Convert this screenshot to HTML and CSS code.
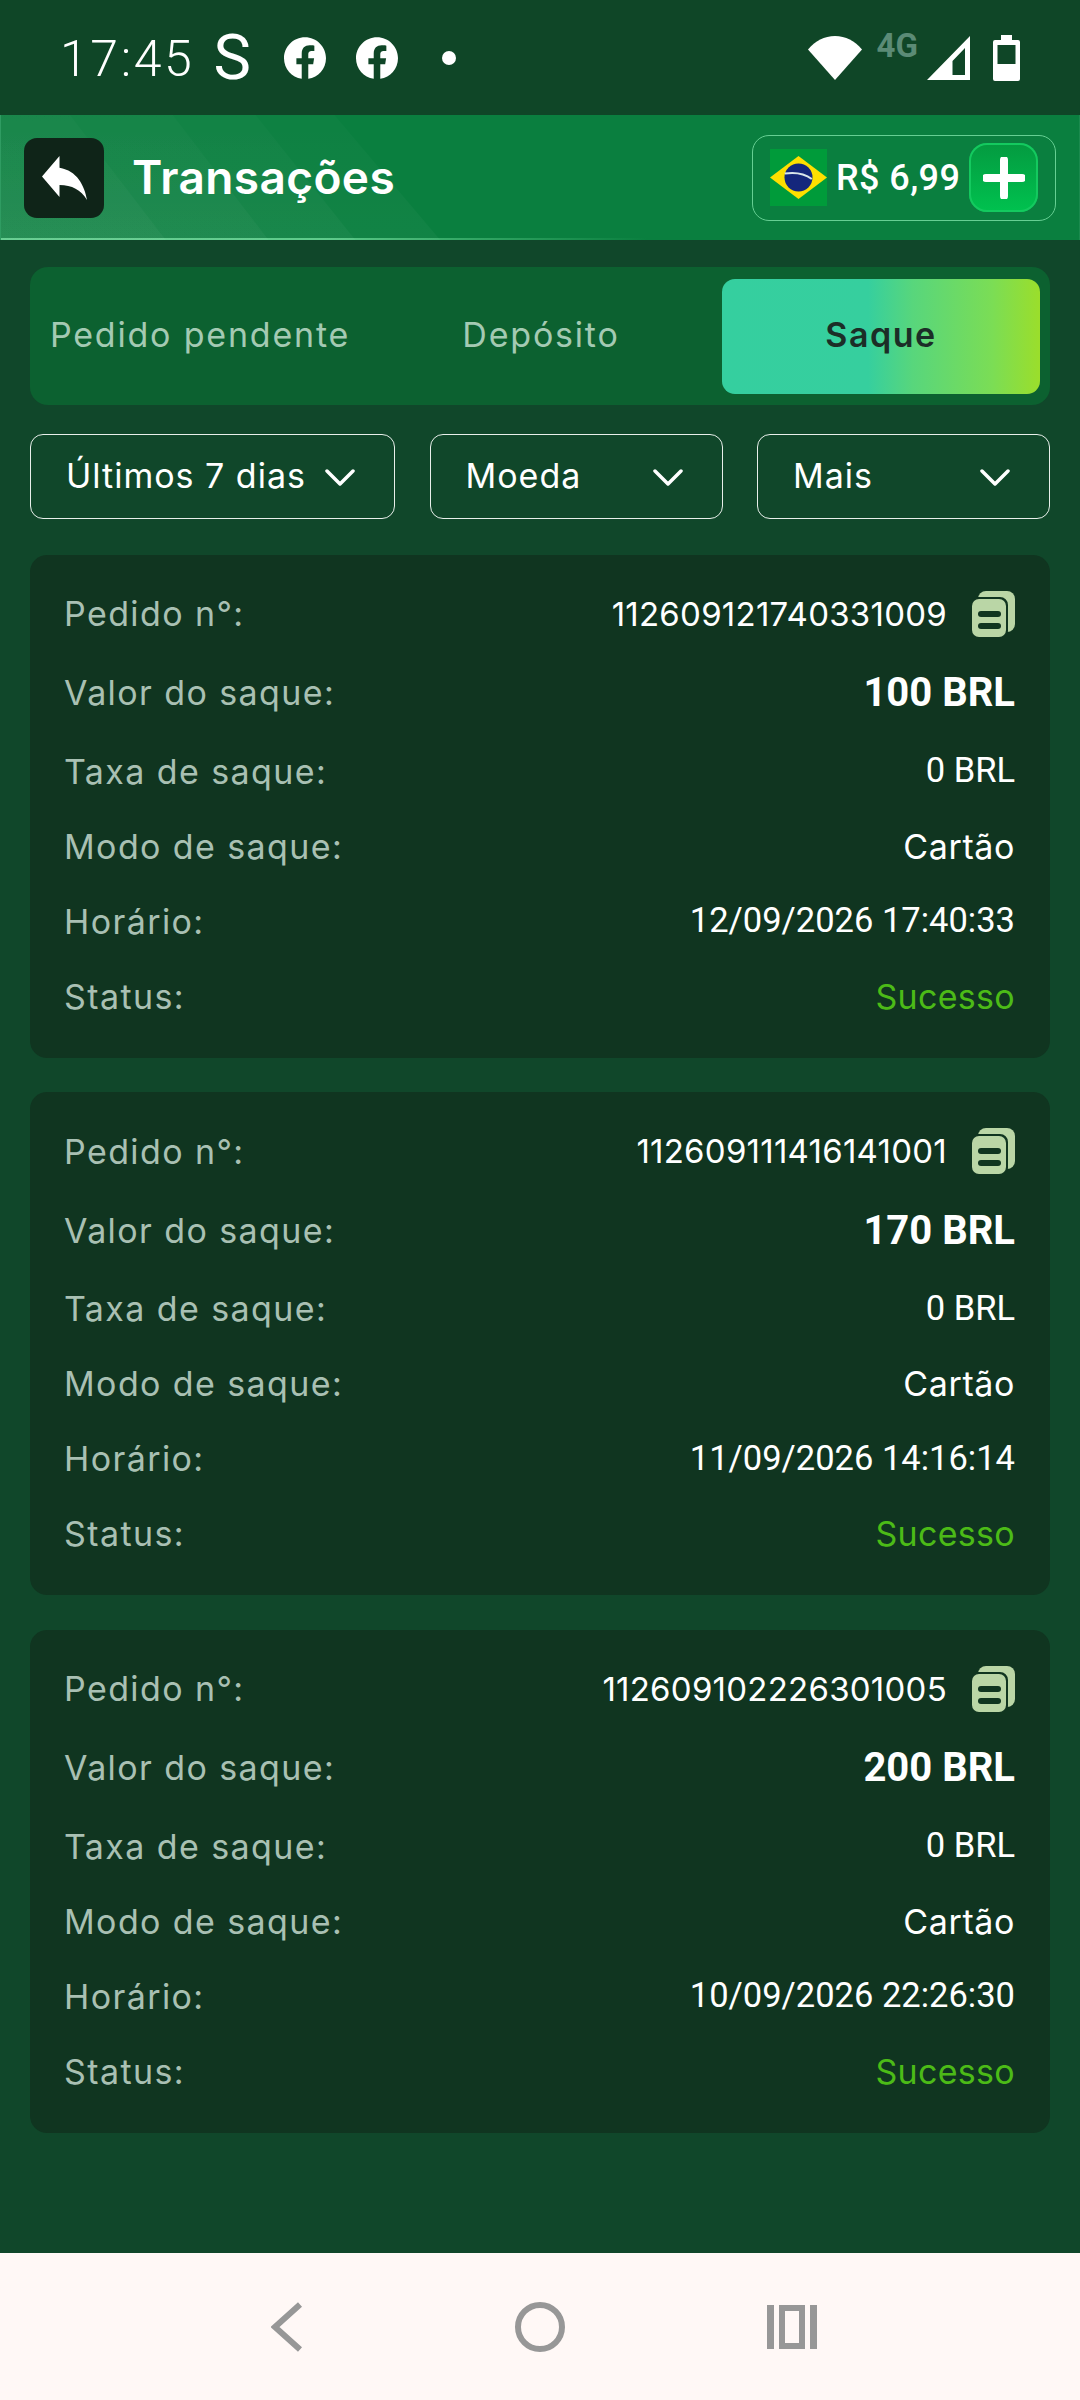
FILE: index.html
```html
<!DOCTYPE html>
<html lang="pt-BR">
<head>
<meta charset="utf-8">
<title>Transações</title>
<link rel="stylesheet" href="styles.css">
</head>
<body>
<div class="screen">
  <div class="statusbar">
    <span class="time">17:45</span>
    <span class="s-icon">S</span>
    <svg class="fb fb-first" viewBox="0 0 24 24"><path d="M24 12.073c0-6.627-5.373-12-12-12s-12 5.373-12 12c0 5.99 4.388 10.954 10.125 11.854v-8.385H7.078v-3.47h3.047V9.43c0-3.007 1.792-4.669 4.533-4.669 1.312 0 2.686.235 2.686.235v2.953H15.83c-1.491 0-1.956.925-1.956 1.874v2.25h3.328l-.532 3.47h-2.796v8.385C19.612 23.027 24 18.062 24 12.073z"/></svg>
    <svg class="fb fb-second" viewBox="0 0 24 24"><path d="M24 12.073c0-6.627-5.373-12-12-12s-12 5.373-12 12c0 5.99 4.388 10.954 10.125 11.854v-8.385H7.078v-3.47h3.047V9.43c0-3.007 1.792-4.669 4.533-4.669 1.312 0 2.686.235 2.686.235v2.953H15.83c-1.491 0-1.956.925-1.956 1.874v2.25h3.328l-.532 3.47h-2.796v8.385C19.612 23.027 24 18.062 24 12.073z"/></svg>
    <span class="dot"></span>
    <span class="status-spacer"></span>
    <svg class="wifi" viewBox="0 0 54 44"><path d="M0 13.5C7 5 16.500 0 27 0s20 5 27 13.500L27 44z"/></svg>
    <span class="net">4G</span>
    <svg class="signal" viewBox="0 0 43 44"><path fill-rule="evenodd" d="M43 0v44H0zM38 12 25.500 25v14H38z"/></svg>
    <svg class="battery" viewBox="0 0 27 46"><path fill-rule="evenodd" d="M8 0h11v5h6a2 2 0 0 1 2 2v37a2 2 0 0 1-2 2H2a2 2 0 0 1-2-2V7a2 2 0 0 1 2-2h6zM4.500 10v19h18V10z"/></svg>
  </div>

  <header class="topbar">
    <svg class="stripes" viewBox="0 0 1080 125" preserveAspectRatio="none">
      <defs>
        <linearGradient id="fade" x1="0" y1="0" x2="0" y2="1">
          <stop offset="0" stop-color="#fff" stop-opacity="0.016"/>
          <stop offset="1" stop-color="#fff" stop-opacity="0.032"/>
        </linearGradient>
      </defs>
      <polygon fill="url(#fade)" points="0,0 69,0 165,125 0,125"/>
      <polygon fill="url(#fade)" points="0,0 172,0 268,125 0,125"/>
      <polygon fill="url(#fade)" points="0,0 255,0 355,125 0,125"/>
      <polygon fill="url(#fade)" points="0,0 334,0 440,125 0,125"/>
    </svg>
    <button class="back" type="button" aria-label="Voltar">
      <svg viewBox="3 5 18 15" preserveAspectRatio="none"><path d="M10 9V5l-7 7 7 7v-4.100c5 0 8.500 1.600 11 5.100-1-5-4-10-11-11z"/></svg>
    </button>
    <h1 class="title">Transações</h1>
    <div class="balance">
      <svg class="flag" viewBox="0 0 57 57">
        <rect width="57" height="57" fill="#009b3a"/>
        <polygon points="28.500,7 57,28.500 28.500,50 0,28.500" fill="#fedf00"/>
        <circle cx="28.500" cy="28.500" r="14" fill="#14277c"/>
        <path d="M14.800 24.500c10-1.500 19-.5 27 5.500" fill="none" stroke="#d9e6ea" stroke-width="2"/>
      </svg>
      <span class="amount">R$ 6,99</span>
      <span class="plus">
        <svg viewBox="0 0 42 42"><path d="M21 3v36M3 21h36" fill="none" stroke="#fff" stroke-width="8" stroke-linecap="round"/></svg>
      </span>
    </div>
  </header>

  <main class="content">
    <nav class="tabs">
      <span class="tab">Pedido pendente</span>
      <span class="tab">Depósito</span>
      <span class="tab tab-active">Saque</span>
    </nav>

    <div class="filters">
      <div class="filter"><span>Últimos 7 dias</span><svg class="chev" viewBox="0 0 30 18"><path d="M2 2l13 13L28 2" fill="none" stroke="#fff" stroke-width="3.500" stroke-linecap="round" stroke-linejoin="round"/></svg></div>
      <div class="filter"><span>Moeda</span><svg class="chev" viewBox="0 0 30 18"><path d="M2 2l13 13L28 2" fill="none" stroke="#fff" stroke-width="3.500" stroke-linecap="round" stroke-linejoin="round"/></svg></div>
      <div class="filter"><span>Mais</span><svg class="chev" viewBox="0 0 30 18"><path d="M2 2l13 13L28 2" fill="none" stroke="#fff" stroke-width="3.500" stroke-linecap="round" stroke-linejoin="round"/></svg></div>
    </div>

    <section class="cards">
      <article class="card">
        <div class="row row-first"><span class="label">Pedido n°:</span><span class="value order">112609121740331009<svg class="copy" viewBox="0 0 43 46"><rect x="6" y="0" width="37" height="41" rx="8" fill="#bad6a6"/><rect x="-2" y="6" width="38" height="42" rx="8" fill="#103520"/><rect x="0" y="8" width="34" height="38" rx="7" fill="#bad6a6"/><rect x="6" y="20" width="23" height="6" rx="3" fill="#103520"/><rect x="6" y="32" width="23" height="6" rx="3" fill="#103520"/></svg></span></div>
        <div class="row row-second"><span class="label">Valor do saque:</span><span class="value strong">100 BRL</span></div>
        <div class="row"><span class="label">Taxa de saque:</span><span class="value num">0 BRL</span></div>
        <div class="row"><span class="label">Modo de saque:</span><span class="value">Cartão</span></div>
        <div class="row"><span class="label">Horário:</span><span class="value num">12/09/2026 17:40:33</span></div>
        <div class="row"><span class="label">Status:</span><span class="value ok">Sucesso</span></div>
      </article>
      <article class="card">
        <div class="row row-first"><span class="label">Pedido n°:</span><span class="value order">112609111416141001<svg class="copy" viewBox="0 0 43 46"><rect x="6" y="0" width="37" height="41" rx="8" fill="#bad6a6"/><rect x="-2" y="6" width="38" height="42" rx="8" fill="#103520"/><rect x="0" y="8" width="34" height="38" rx="7" fill="#bad6a6"/><rect x="6" y="20" width="23" height="6" rx="3" fill="#103520"/><rect x="6" y="32" width="23" height="6" rx="3" fill="#103520"/></svg></span></div>
        <div class="row row-second"><span class="label">Valor do saque:</span><span class="value strong">170 BRL</span></div>
        <div class="row"><span class="label">Taxa de saque:</span><span class="value num">0 BRL</span></div>
        <div class="row"><span class="label">Modo de saque:</span><span class="value">Cartão</span></div>
        <div class="row"><span class="label">Horário:</span><span class="value num">11/09/2026 14:16:14</span></div>
        <div class="row"><span class="label">Status:</span><span class="value ok">Sucesso</span></div>
      </article>
      <article class="card">
        <div class="row row-first"><span class="label">Pedido n°:</span><span class="value order">112609102226301005<svg class="copy" viewBox="0 0 43 46"><rect x="6" y="0" width="37" height="41" rx="8" fill="#bad6a6"/><rect x="-2" y="6" width="38" height="42" rx="8" fill="#103520"/><rect x="0" y="8" width="34" height="38" rx="7" fill="#bad6a6"/><rect x="6" y="20" width="23" height="6" rx="3" fill="#103520"/><rect x="6" y="32" width="23" height="6" rx="3" fill="#103520"/></svg></span></div>
        <div class="row row-second"><span class="label">Valor do saque:</span><span class="value strong">200 BRL</span></div>
        <div class="row"><span class="label">Taxa de saque:</span><span class="value num">0 BRL</span></div>
        <div class="row"><span class="label">Modo de saque:</span><span class="value">Cartão</span></div>
        <div class="row"><span class="label">Horário:</span><span class="value num">10/09/2026 22:26:30</span></div>
        <div class="row"><span class="label">Status:</span><span class="value ok">Sucesso</span></div>
      </article>
    </section>
  </main>

  <footer class="navbar">
    <svg class="nav-back" viewBox="0 0 32 50"><path d="M29 2.500 4 25l25 22.500" fill="none" stroke="#979797" stroke-width="6"/></svg>
    <span class="nav-home"></span>
    <svg class="nav-recent" viewBox="0 0 50 44"><path fill="#979797" fill-rule="evenodd" d="M0 0h7v44H0zM43 0h7v44h-7zM12 0h26v44H12zM18 6v32h14V6z"/></svg>
  </footer>
</div>
</body>
</html>
```

FILE: styles.css
```css
* { box-sizing: border-box; }

html, body { margin: 0; padding: 0; }

body {
  background: #10472a;
  font-family: "Inter", "Liberation Sans", sans-serif;
  color: #fff;
}

.screen {
  width: 1080px;
  height: 2400px;
  display: flex;
  flex-direction: column;
  overflow: hidden;
  background: #10472a;
}

/* Status bar */
.statusbar {
  height: 115px;
  flex: none;
  display: flex;
  align-items: center;
  padding: 0 60px 0 60px;
  background: #0f4627;
}
.time {
  font-family: "Roboto", sans-serif;
  font-weight: 300;
  font-size: 50px;
  letter-spacing: 2.6px;
  line-height: 1;
  margin-top: 2px;
}
.s-icon {
  font-family: "Roboto", sans-serif;
  font-weight: 400;
  font-size: 63px;
  line-height: 1;
  margin-left: 19px;
}
.fb { width: 42px; height: 42px; fill: #fff; }
.fb-first { margin-left: 33px; }
.fb-second { margin-left: 30px; }
.dot {
  width: 14px;
  height: 14px;
  border-radius: 50%;
  background: #fff;
  margin-left: 44px;
}
.status-spacer { flex: 1; }
.wifi { width: 54px; height: 44px; fill: #fff; }
.net {
  font-family: "Roboto", sans-serif;
  font-weight: 700;
  font-size: 33px;
  line-height: 1;
  color: #5b8b76;
  margin-left: 15px;
  margin-top: -24px;
}
.signal { width: 43px; height: 44px; fill: #fff; margin-left: 9px; }
.battery { width: 27px; height: 46px; fill: #fff; margin-left: 23px; }

/* Top bar */
.topbar {
  position: relative;
  height: 125px;
  flex: none;
  display: flex;
  align-items: center;
  padding: 0 23px 0 24px;
  background:
    linear-gradient(90deg, #55c884 0%, #55c884 30%, #0a7f3f 60%) left bottom / 100% 2px no-repeat,
    #0a7f3f;
  border-left: 1px solid #2f9c62;
  border-right: 1px solid #1b8a4e;
}
.stripes {
  position: absolute;
  inset: 0;
  width: 100%;
  height: 100%;
}
.back {
  position: relative;
  width: 80px;
  height: 80px;
  padding: 0;
  flex: none;
  display: flex;
  align-items: center;
  justify-content: center;
  border: 0;
  border-radius: 13px;
  background: #0f2418;
  margin-left: -1px;
}
.back svg { width: 45px; height: 44px; fill: #fff; }
.title {
  position: relative;
  margin: 0 0 0 28px;
  padding-bottom: 2px;
  font-size: 46px;
  font-weight: 600;
  letter-spacing: 0.4px;
  line-height: 1;
}
.balance {
  position: relative;
  margin-left: auto;
  width: 304px;
  height: 86px;
  display: flex;
  align-items: center;
  padding: 0 17px 0 17px;
  border: 1px solid #66cf93;
  border-radius: 17px;
}
.flag { width: 57px; height: 57px; flex: none; }
.amount {
  font-family: "Roboto", sans-serif;
  font-weight: 500;
  font-size: 36px;
  letter-spacing: 0.4px;
  margin-left: 9px;
  white-space: nowrap;
}
.plus {
  margin-left: auto;
  width: 69px;
  height: 69px;
  flex: none;
  display: flex;
  align-items: center;
  justify-content: center;
  border-radius: 18px;
  background: linear-gradient(180deg, #049a40 0%, #00c24f 100%);
  box-shadow: inset 0 0 0 2px #14c95f;
}
.plus svg { width: 42px; height: 42px; }

/* Main */
.content {
  flex: 1;
  padding: 27px 30px 0;
  background: #10472a;
}
.tabs {
  height: 138px;
  padding: 12px 10px 11px;
  display: grid;
  grid-template-columns: 320px 362px 318px;
  border-radius: 18px;
  background: #0c6130;
}
.tab {
  display: flex;
  align-items: center;
  justify-content: center;
  padding-bottom: 4px;
  font-size: 34px;
  letter-spacing: 1.8px;
  color: #a4cab3;
}
.tab-active {
  font-weight: 600;
  letter-spacing: 1.5px;
  color: #1c2d27;
  border-radius: 13px;
  background: linear-gradient(90deg, #35cf9f 0%, #36cf9e 46%, #58d67c 60%, #7bdd55 85%, #9bde2b 100%);
}

.filters {
  margin-top: 29px;
  display: grid;
  grid-template-columns: 365px 293px 293px;
  gap: 34.5px;
}
.filter {
  height: 85px;
  display: flex;
  align-items: center;
  justify-content: space-between;
  padding: 0 39px 2px 35px;
  border: 1.5px solid #e8efea;
  border-radius: 13px;
  font-size: 34px;
  letter-spacing: 1px;
}
.chev { width: 30px; height: 18px; flex: none; margin-top: 4px; }

.cards {
  margin-top: 35.75px;
  display: flex;
  flex-direction: column;
  gap: 34.5px;
}
.card {
  height: 503px;
  padding: 20px 35px 0 34px;
  border-radius: 17px;
  background: #103520;
}
.row {
  height: 75px;
  display: flex;
  align-items: center;
  justify-content: space-between;
}
.row-first { padding-top: 5px; margin-bottom: 6.5px; }
.row-second { margin-bottom: 3.5px; }
.label {
  padding-bottom: 2px;
  font-size: 34px;
  letter-spacing: 1.4px;
  color: #a9c0b3;
}
.value {
  padding-bottom: 2px;
  font-size: 34px;
  letter-spacing: 0.6px;
  color: #fff;
  display: flex;
  align-items: center;
}
.order { font-size: 33px; letter-spacing: 0.25px; }
.strong {
  font-family: "Roboto", sans-serif;
  font-weight: 700;
  font-size: 40px;
  letter-spacing: 0;
}
.num {
  padding-bottom: 4px;
  font-family: "Roboto", sans-serif;
  font-size: 34.5px;
  letter-spacing: 0;
}
.ok { color: #4cbb17; letter-spacing: 0.3px; }
.copy { width: 43px; height: 46px; margin-left: 25px; flex: none; }

/* Android nav */
.navbar {
  height: 147px;
  flex: none;
  background: #fff8f6;
  display: flex;
  align-items: center;
  padding-left: 271px;
}
.nav-back { width: 32px; height: 50px; }
.nav-home {
  width: 50px;
  height: 50px;
  margin-left: 212px;
  border: 6px solid #979797;
  border-radius: 50%;
}
.nav-recent { width: 50px; height: 44px; margin-left: 202px; }
```
